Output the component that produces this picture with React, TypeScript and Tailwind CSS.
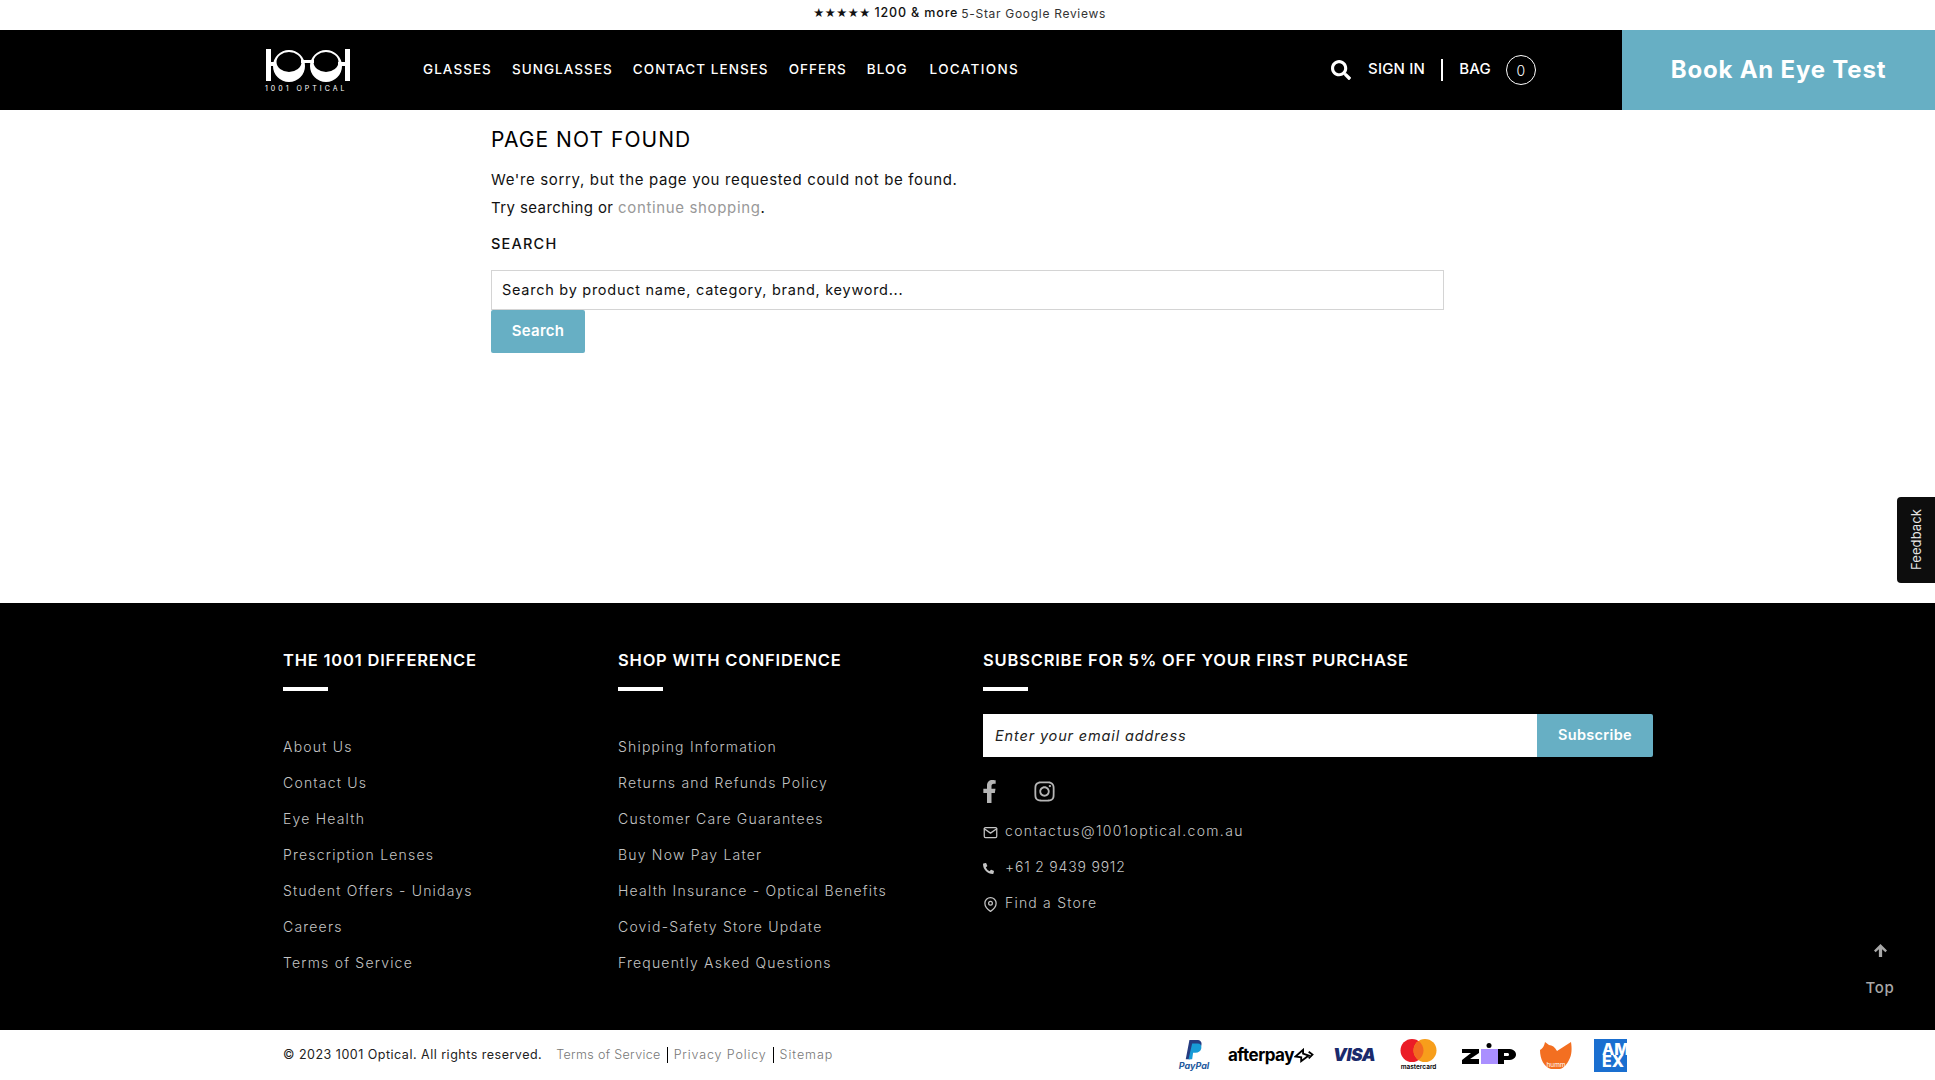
import { FaSearch, FaFacebookF, FaInstagram, FaPhoneAlt } from "react-icons/fa";
import { FiMail, FiMapPin } from "react-icons/fi";

const NAV = ["GLASSES", "SUNGLASSES", "CONTACT LENSES", "OFFERS", "BLOG", "LOCATIONS"];

const DIFFERENCE = [
  "About Us",
  "Contact Us",
  "Eye Health",
  "Prescription Lenses",
  "Student Offers - Unidays",
  "Careers",
  "Terms of Service"
];

const CONFIDENCE = [
  "Shipping Information",
  "Returns and Refunds Policy",
  "Customer Care Guarantees",
  "Buy Now Pay Later",
  "Health Insurance - Optical Benefits",
  "Covid-Safety Store Update",
  "Frequently Asked Questions"
];

// Brand mark: two bars and two crescent lenses
function Logo() {
  return (
    <div className="flex flex-col w-[85px]">
      <svg viewBox="0 0 85 33" className="w-[85px] h-[33px]" fill="#fff">
        <rect x="1" y="0" width="5" height="32" />
        <rect x="80" y="0" width="5" height="32" />
        <path
          fillRule="evenodd"
          d="M24 1a16 16 0 1 0 0 32a16 16 0 1 0 0-32zM24 3a12.500 10 0 1 1 0 20a12.500 10 0 1 1 0-20z"
        />
        <path
          fillRule="evenodd"
          d="M61 1a16 16 0 1 0 0 32a16 16 0 1 0 0-32zM61 3a12.500 10 0 1 1 0 20a12.500 10 0 1 1 0-20z"
        />
        <rect x="6" y="13" width="4" height="4" />
        <rect x="36" y="11" width="13" height="3" />
        <rect x="73" y="13" width="7" height="4" />
      </svg>
      <span className="mt-[2px] text-[7px] leading-[9px] tracking-[3px] text-white whitespace-nowrap">
        1001 OPTICAL
      </span>
    </div>
  );
}

function FooterHeading({ children }: { children: string }) {
  return (
    <div>
      <h3 className="text-[16.500px] leading-5 font-semibold tracking-[0.8px] text-white whitespace-nowrap">
        {children}
      </h3>
      <div className="mt-[17px] w-[45px] h-1 bg-white" />
    </div>
  );
}

function LinkList({ items }: { items: string[] }) {
  return (
    <ul className="mt-[45px] flex flex-col gap-[14px]">
      {items.map((item) => (
        <li key={item} className="text-[14px] leading-[22px] tracking-[1.2px] font-light text-[#c4c4c4] whitespace-nowrap">
          {item}
        </li>
      ))}
    </ul>
  );
}

function PaymentLogos() {
  return (
    <div className="flex items-center h-[36px]">
      {/* PayPal */}
      <div className="w-[32px] flex flex-col items-center">
        <svg viewBox="0 0 24 24" className="w-[22px] h-[22px]">
          <path fill="#253b80" d="M7 1h8c4 0 6 2 5 6-1 4-4 6-8 6H9.500L8 22H3z" />
          <path fill="#179bd7" d="M10 5h6c3 0 4.500 2 4 5-.6 3-3 5-6.500 5H11l-1 7H6z" />
        </svg>
        <span className="text-[9px] leading-[10px] font-bold italic text-[#1f5a9e]">PayPal</span>
      </div>
      {/* Afterpay */}
      <div className="ml-[18px] flex items-center w-[87px]">
        <span className="text-[17px] font-bold leading-none tracking-[-0.5px] text-black">afterpay</span>
        <svg viewBox="0 0 20 16" className="w-[20px] h-[15px] shrink-0" fill="none" stroke="#000" strokeWidth="2">
          <path d="M1 9l8-7 0 4 6 2-8 6 0-4z" />
          <path d="M15 4l4 3-4 4" />
        </svg>
      </div>
      {/* Visa */}
      <span className="ml-[18px] w-[43px] text-[17.500px] font-black italic leading-none tracking-[-0.5px] text-[#1a2a6c]">
        VISA
      </span>
      {/* Mastercard */}
      <div className="ml-[24px] w-[37px] flex flex-col items-center">
        <svg viewBox="0 0 37 23" className="w-[37px] h-[23px]">
          <circle cx="12" cy="11.500" r="11.500" fill="#eb1c26" />
          <circle cx="25" cy="11.500" r="11.500" fill="#f79e1b" />
          <path fill="#f26a21" d="M18.500 2a11.500 11.500 0 0 1 0 19a11.500 11.500 0 0 1 0-19z" />
        </svg>
        <span className="mt-[1px] text-[6.500px] leading-[8px] font-semibold text-black">mastercard</span>
      </div>
      {/* Zip */}
      <svg viewBox="0 0 54 24" className="ml-[25px] w-[54px] h-[24px]">
        <path fill="#000" d="M0 6h17v4l-9 6h9v5H0v-4l9-7H0z" />
        <path fill="#aa8fff" d="M19 6h17v15H19z" />
        <circle cx="27" cy="2.500" r="2.500" fill="#000" />
        <path fill="#000" d="M36 6h10c5 0 8 2 8 5.500S51 17 46 17h-4v4h-6zM42 10v3h3c1.500 0 2-.5 2-1.500s-.5-1.500-2-1.500z" />
      </svg>
      {/* Humm */}
      <svg viewBox="0 0 33 28" className="ml-[23px] w-[33px] h-[28px]">
        <path
          fill="#f36f21"
          d="M1 9C3 8 5 6 6 1l4 3c3 0 6 2 8 6L32 1c1 6 1 13-2 18-2 4-5 8-9 9H12C5 26 1 18 1 9z"
        />
        <text x="17" y="26" textAnchor="middle" fontSize="6.500" fill="#fff">humm</text>
      </svg>
      {/* Amex */}
      <div className="ml-[22px] w-[33px] h-[33px] bg-[#1a6fd0] overflow-hidden pl-[8px] pt-[4px]">
        <span className="block w-[30px] text-[16px] leading-[12px] font-extrabold text-white">
          AM EX
        </span>
      </div>
    </div>
  );
}

export default function App() {
  return (
    <div className="relative w-full h-[1080px] overflow-hidden bg-white font-[Inter,sans-serif] text-[#111]">
      {/* Announcement */}
      <div className="h-[30px] flex items-center justify-center text-[12.500px] pb-[3px] pr-4">
        <span className="text-[11px]">★★★★★</span>
        <span className="ml-1 font-medium tracking-[0.85px]">1200 &amp; more</span>
        <span className="ml-[3px] text-[12px] tracking-[0.7px] text-[#333]">5-Star Google Reviews</span>
      </div>

      {/* Header */}
      <header className="h-20 bg-black flex items-center text-white">
        <div className="ml-[265px] w-[158px] shrink-0 pt-[1px]">
          <Logo />
        </div>
        <nav className="flex gap-5 w-[908px] shrink-0 pb-[2px]">
          {NAV.map((item) => (
            <span key={item} className="text-[13.500px] font-medium tracking-[1.05px] whitespace-nowrap last:ml-[2px] last:tracking-[1.35px]">
              {item}
            </span>
          ))}
        </nav>
        <div className="flex items-center w-[291px] shrink-0">
          <FaSearch className="w-5 h-5" />
          <span className="ml-[17px] text-[15px] font-medium tracking-[0.2px] pb-[1px]">SIGN IN</span>
          <span className="ml-4 w-[2px] h-[22px] bg-white" />
          <span className="ml-4 text-[15px] font-medium tracking-[0.2px] pb-[1px]">BAG</span>
          <span className="ml-[15px] w-[30px] h-[30px] rounded-full border border-white flex items-center justify-center text-[14px] font-light">
            0
          </span>
        </div>
        <div className="w-[313px] h-full bg-[#67afc4] flex items-center justify-center text-[24px] font-bold tracking-[0.8px] pb-[1px]">
          Book An Eye Test
        </div>
      </header>

      {/* Not found */}
      <main className="h-[493px] pl-[491px] pt-[15px]">
        <div className="w-[953px]">
          <h1 className="text-[21px] leading-[30px] font-normal tracking-[1.05px] text-black">PAGE NOT FOUND</h1>
          <p className="mt-[11px] text-[15px] leading-[28px] tracking-[0.65px]">
            We're sorry, but the page you requested could not be found.
          </p>
          <p className="text-[15px] leading-[28px] tracking-[0.65px]">
            <span className="tracking-[0.4px]">Try searching or </span>
            <span className="text-[#999]">continue shopping</span>.
          </p>
          <h2 className="mt-3 text-[14.500px] leading-5 font-medium tracking-[1.2px]">SEARCH</h2>
          <div className="mt-4 h-10 border border-[#d4d4d4] flex items-center px-[10px] text-[14.500px] tracking-[0.73px]">
            Search by product name, category, brand, keyword...
          </div>
          <button className="w-[94px] h-[43px] rounded-[2px] bg-[#67afc4] text-white text-[15px] font-semibold tracking-[0.3px]">
            Search
          </button>
        </div>
      </main>

      {/* Footer */}
      <footer className="h-[427px] bg-black pl-[283px] pt-[47px] flex">
        <div className="w-[335px] shrink-0">
          <FooterHeading>THE 1001 DIFFERENCE</FooterHeading>
          <LinkList items={DIFFERENCE} />
        </div>
        <div className="w-[365px] shrink-0">
          <FooterHeading>SHOP WITH CONFIDENCE</FooterHeading>
          <LinkList items={CONFIDENCE} />
        </div>
        <div className="w-[670px] shrink-0">
          <FooterHeading>SUBSCRIBE FOR 5% OFF YOUR FIRST PURCHASE</FooterHeading>
          <div className="mt-[23px] flex h-[43px]">
            <div className="w-[554px] bg-white flex items-center px-3 text-[14.500px] italic tracking-[0.85px] text-[#222]">
              Enter your email address
            </div>
            <div className="w-[116px] bg-[#67afc4] rounded-r-[2px] flex items-center justify-center text-white text-[14.500px] font-semibold tracking-[0.3px] pb-[1px]">
              Subscribe
            </div>
          </div>
          <div className="mt-[23px] flex items-center text-[#b5b5b5]">
            <FaFacebookF className="w-[15px] h-[23px] -ml-[1px]" />
            <FaInstagram className="ml-[36px] w-[23px] h-[23px]" />
          </div>
          <div className="mt-[17px] flex flex-col gap-[14px] text-[14px] leading-[22px] font-light text-[#c4c4c4]">
            <div className="flex items-center tracking-[1.35px]">
              <FiMail className="w-[15px] h-[15px] mr-[7px] translate-y-[1px]" />
              contactus@1001optical.com.au
            </div>
            <div className="flex items-center tracking-[0.8px]">
              <FaPhoneAlt className="w-[11px] h-[11px] mr-[11px] translate-y-[1px]" />
              +61 2 9439 9912
            </div>
            <div className="flex items-center tracking-[1.2px]">
              <FiMapPin className="w-[15px] h-[15px] mr-[7px] translate-y-[1px]" />
              Find a Store
            </div>
          </div>
        </div>
      </footer>

      {/* Legal strip */}
      <div className="h-[50px] pl-[283px] pr-[308px] flex items-center">
        <span className="text-[12.500px] tracking-[0.5px] text-[#222] whitespace-nowrap">
          © 2023 1001 Optical. All rights reserved.
        </span>
        <span className="ml-[14px] text-[12.500px] font-light tracking-[0.35px] text-[#777] whitespace-nowrap">Terms of Service</span>
        <span className="mx-[6px] w-px h-4 bg-black" />
        <span className="text-[12.500px] font-light tracking-[0.85px] text-[#777] whitespace-nowrap">Privacy Policy</span>
        <span className="mx-[6px] w-px h-4 bg-black" />
        <span className="text-[12.500px] font-light tracking-[0.95px] text-[#777] whitespace-nowrap">Sitemap</span>
        <div className="ml-auto">
          <PaymentLogos />
        </div>
      </div>

      {/* Floating feedback tab */}
      <div className="absolute right-0 top-[497px] w-[38px] h-[86px] rounded-l-[4px] bg-[#0d0d0d] flex items-center justify-center pl-[2px]">
        <span className="[writing-mode:vertical-rl] rotate-180 text-[13px] tracking-[0.1px] text-[#e5e5e5]">Feedback</span>
      </div>

      {/* Back to top */}
      <div className="absolute left-[1860px] top-[944px] w-[40px] flex flex-col items-center text-[#a8a8a8]">
        <svg viewBox="0 0 12 12" className="w-[13px] h-[13px]" fill="currentColor">
          <path d="M6 0l6 6-1.500 1.500L7.500 4.800V12h-3V4.800L1.500 7.500 0 6z" />
        </svg>
        <span className="mt-[21px] text-[15px] leading-5 font-medium tracking-[0.6px]">Top</span>
      </div>
    </div>
  );
}
